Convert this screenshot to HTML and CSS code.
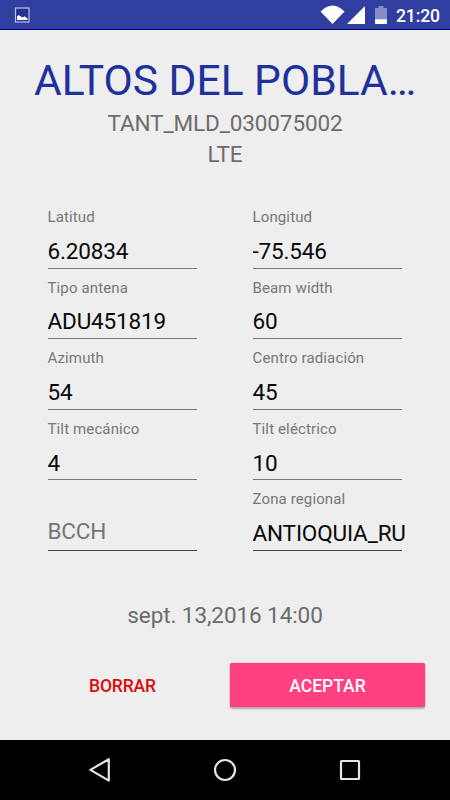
FILE: index.html
```html
<!DOCTYPE html>
<html lang="es">
<head>
<meta charset="utf-8">
<title>Altos del Poblado</title>
<link rel="stylesheet" href="styles.css">
</head>
<body>
<header class="status">
  <svg class="picture" width="16" height="16" viewBox="0 0 16 16"><rect x="1.500" y="1" width="13.5" height="14" fill="#26348d" stroke="#b9c0e5" stroke-width="1.200"/><path d="M3 13V9.500L4.500 8 6 9 8.500 10.500 10.500 9.300 13.500 11.500V13Z" fill="#fff"/></svg>
  <div class="tray">
    <svg width="86" height="20" viewBox="320 5 86 20"><path d="M320.5 11.500Q332.5-.5 344.5 11.500L332.5 24Z M347 24 365 6V24Z" fill="#fff"/><path d="M375 8H378.500V6H383.500V8H387V19.500H375Z" fill="#858dc5"/><path d="M375 19.300H387V23.200Q387 24 386.200 24H375.800Q375 24 375 23.200Z" fill="#fff"/></svg>
    <span class="clock">21:20</span>
  </div>
</header>
<main>
  <h1>ALTOS DEL POBLA…</h1>
  <p class="sub">TANT_MLD_030075002</p>
  <p class="sub">LTE</p>
  <form class="fields">
    <div class="field"><label>Latitud</label><div class="value">6.20834</div></div>
    <div class="field"><label>Longitud</label><div class="value">-75.546</div></div>
    <div class="field"><label>Tipo antena</label><div class="value">ADU451819</div></div>
    <div class="field"><label>Beam width</label><div class="value">60</div></div>
    <div class="field"><label>Azimuth</label><div class="value">54</div></div>
    <div class="field"><label>Centro radiación</label><div class="value">45</div></div>
    <div class="field"><label>Tilt mecánico</label><div class="value">4</div></div>
    <div class="field"><label>Tilt eléctrico</label><div class="value">10</div></div>
    <div class="field last empty"><div class="value">BCCH</div></div>
    <div class="field last"><label>Zona regional</label><div class="value">ANTIOQUIA_RU</div></div>
  </form>
  <p class="date">sept. 13,2016 14:00</p>
  <div class="actions">
    <button class="delete" type="button">BORRAR</button>
    <button class="accept" type="button">ACEPTAR</button>
  </div>
</main>
<nav>
  <svg width="24" height="26" viewBox="0 0 24 26"><path d="M20.800 2.200V23.600L2.400 12.900Z"/></svg>
  <svg width="24" height="26" viewBox="0 0 24 26"><circle cx="12" cy="13" r="10"/></svg>
  <svg width="24" height="26" viewBox="0 0 24 26"><rect x="3" y="4" width="18" height="18" rx=".5"/></svg>
</nav>
</body>
</html>
```
FILE: styles.css
```css
* { box-sizing: border-box; }
body {
  margin: 0;
  width: 450px;
  height: 800px;
  display: flex;
  flex-direction: column;
  overflow: hidden;
  background: #eee;
  font-family: Roboto, sans-serif;
}
h1, p { margin: 0; font-weight: 400; text-align: center; white-space: nowrap; }
.status {
  height: 30px;
  flex: none;
  display: flex;
  justify-content: space-between;
  padding: 0 10px 0 14px;
  background: #303f9f;
  border-bottom: 1px solid #00008b;
}
.picture { margin-top: 7px; }
.tray { display: flex; }
.tray svg { margin-top: 5px; }
.clock {
  width: 45px;
  margin-right: -1px;
  margin-left: -10px;
  color: #fff;
  font-size: 17.5px;
  font-weight: 500;
  letter-spacing: -.1px;
  line-height: 32px;
}
main { height: 710px; flex: none; padding-top: 26px; }
h1 { font-size: 42.5px; line-height: 50px; color: #20309c; margin-bottom: 2px; }
.sub { font-size: 22.5px; line-height: 30.5px; letter-spacing: -.11px; color: #6c6c6c; }
.fields {
  display: grid;
  grid-template-columns: 149.5px 149.5px;
  grid-auto-rows: 70.6px;
  column-gap: 55.5px;
  margin: 38px 0 0 47.5px;
}
.field { display: flex; flex-direction: column; height: 61.5px; border-bottom: 1px solid #777; }
label { font-size: 15px; line-height: 20px; letter-spacing: .13px; color: #777; margin-bottom: 9.8px; }
.value {
  width: 152.5px;
  overflow: hidden;
  font-size: 22.5px;
  line-height: 28px;
  letter-spacing: -.15px;
  color: #080808;
  white-space: nowrap;
}
.last { border-color: #444; }
.empty { justify-content: flex-end; padding-bottom: 5px; }
.empty .value { color: #757575; }
.date { margin-top: 40px; font-size: 22.5px; line-height: 30px; letter-spacing: -.08px; color: #6c6c6c; }
.actions { display: flex; gap: 10px; margin: 33px 25px 0 25px; }
button {
  flex: 1;
  height: 44px;
  border: 0;
  padding: 2px 0 0;
  font: 500 17.5px/42px Roboto, sans-serif;
  background: none;
}
.delete { color: #db0b0b; letter-spacing: -.15px; }
.accept {
  color: #fff;
  background: #ff4081;
  border-radius: 2.5px;
  box-shadow: 0 2px 2px #0004, 0 0 1px #ff1478;
}
nav {
  height: 60px;
  flex: none;
  display: flex;
  align-items: center;
  justify-content: center;
  gap: 101px;
  background: #000;
}
nav svg { fill: none; stroke: #e5e5e5; stroke-width: 2.2; stroke-linejoin: round; }
```
